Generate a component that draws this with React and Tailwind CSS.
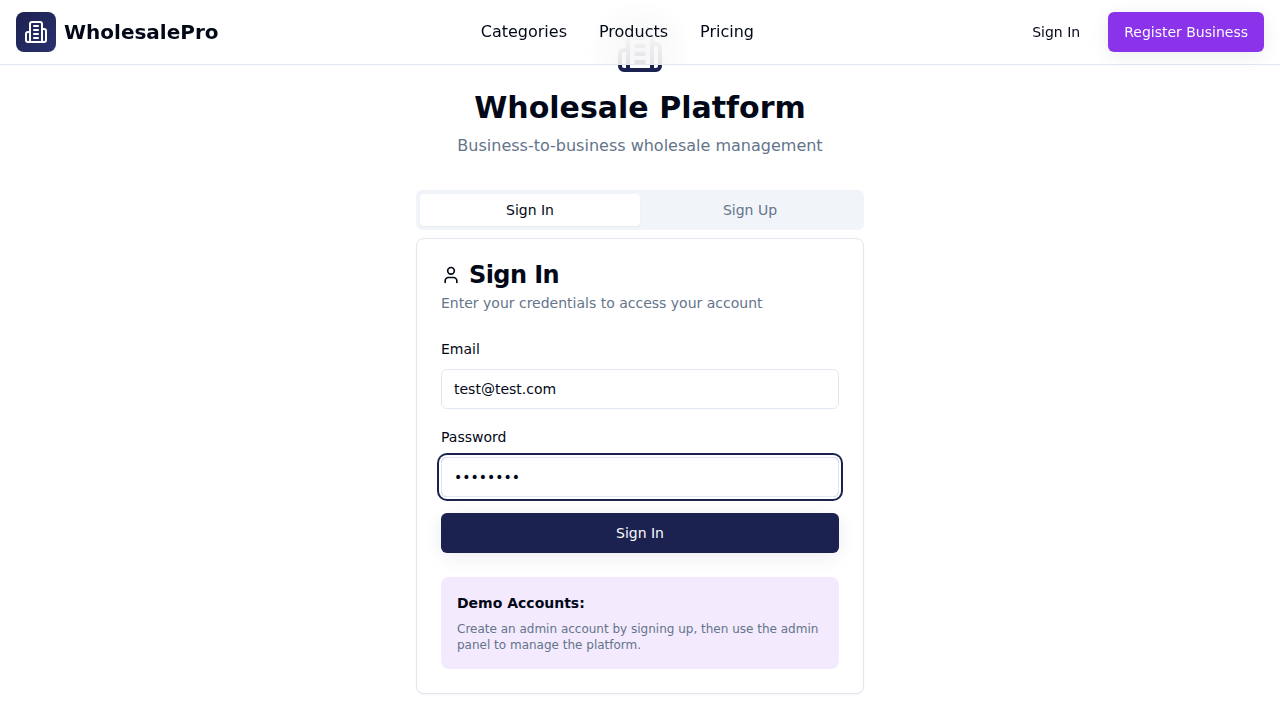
import { User } from "lucide-react";

const button = "inline-flex h-10 items-center justify-center rounded-md px-4 text-sm font-medium";
const elegant = "shadow-[0_4px_20px_-2px_rgba(28,34,79,0.1)]";

function Building({ className }) {
  return (
    <svg className={className} viewBox="0 0 24 24" fill="none" stroke="currentColor" strokeWidth="2" strokeLinecap="round" strokeLinejoin="round">
      <path d="M6 22V4a2 2 0 0 1 2-2h8a2 2 0 0 1 2 2v18Z" />
      <path d="M6 12H4a2 2 0 0 0-2 2v6a2 2 0 0 0 2 2h2" />
      <path d="M18 9h2a2 2 0 0 1 2 2v9a2 2 0 0 1-2 2h-2" />
      <path d="M10 6h4" />
      <path d="M10 10h4" />
      <path d="M10 14h4" />
      <path d="M10 18h4" />
    </svg>
  );
}

function Header() {
  return (
    <header className="sticky top-0 z-50 w-full border-b border-[#e2e8f0] bg-white/90 bg-[radial-gradient(circle_54px_at_50%_52px,rgba(40,40,60,0.04),rgba(40,40,60,0.025)_50%,transparent),linear-gradient(to_bottom,white_32px,rgba(255,255,255,0.5)_48px,transparent_64px)] bg-no-repeat will-change-transform">
      <div className="flex h-16 items-center justify-between px-4">
        <div className="flex items-center gap-2">
          <div className="flex size-10 items-center justify-center rounded-lg bg-linear-to-br from-[#1c224f] to-[#29316f] text-white">
            <Building className="size-6" />
          </div>
          <span className="text-xl font-bold">WholesalePro</span>
        </div>
        <nav className="flex items-center gap-8">
          <a>Categories</a>
          <a>Products</a>
          <a>Pricing</a>
        </nav>
        <div className="flex items-center gap-3">
          <button className={button}>Sign In</button>
          <button className={`${button} ${elegant} bg-[#8b33ea] text-[#f8fafc]`}>Register Business</button>
        </div>
      </div>
    </header>
  );
}

export default function App() {
  return (
    <div className="h-screen overflow-hidden bg-white font-['DejaVu_Sans',sans-serif] text-[#020817]">
      <Header />
      <main className="mx-auto -mt-[39px] w-[448px]">
        <div className="mb-8 text-center">
          <Building className="mx-auto mb-4 size-12 text-[#1c224f]" />
          <h1 className="text-3xl font-bold">Wholesale Platform</h1>
          <p className="mt-2 text-[#64748b]">Business-to-business wholesale management</p>
        </div>
        <div className="grid h-10 grid-cols-2 rounded-md bg-[#f1f5f9] p-1 text-sm font-medium text-[#64748b]">
          <button className="rounded-sm bg-white text-[#020817] shadow-[0_1px_2px_0_rgba(0,0,0,0.05)]">Sign In</button>
          <button>Sign Up</button>
        </div>
        <section className="mt-2 rounded-lg border border-[#e2e8f0] bg-white p-6 shadow-[0_1px_2px_0_rgba(0,0,0,0.05)]">
          <h2 className="flex items-center gap-2 text-2xl leading-none font-semibold tracking-tight">
            <User className="size-5" />
            Sign In
          </h2>
          <p className="mt-1.5 text-sm text-[#64748b]">Enter your credentials to access your account</p>
          <form className="mt-6 space-y-4">
            <div className="space-y-2">
              <label className="block text-sm/6 font-medium">Email</label>
              <input type="email" defaultValue="test@test.com" className="block h-10 w-full rounded-md border border-[#e2e8f0] px-3 py-2 text-sm" />
            </div>
            <div className="space-y-2">
              <label className="block text-sm/6 font-medium">Password</label>
              <input type="password" defaultValue="password" className="block h-10 w-full rounded-md border border-[#e2e8f0] px-3 py-2 text-sm ring-2 ring-[#1c224f] ring-offset-2" />
            </div>
            <button type="button" className={`${button} ${elegant} w-full bg-[#1c224f] text-[#f8fafc]`}>Sign In</button>
          </form>
          <div className="mt-6 rounded-lg bg-[#f3eafd] p-4">
            <h3 className="mb-2 text-sm font-semibold">Demo Accounts:</h3>
            <p className="text-xs text-[#64748b]">Create an admin account by signing up, then use the admin panel to manage the platform.</p>
          </div>
        </section>
      </main>
    </div>
  );
}
